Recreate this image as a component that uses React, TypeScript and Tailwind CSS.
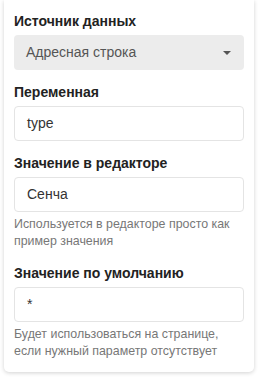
import React from "react";

function Label({ children }: { children: React.ReactNode }) {
  return <div className="text-[14px] leading-[18px] font-bold text-[#222] mb-[5px]">{children}</div>;
}

function Input({ value }: { value: string }) {
  return (
    <div className="h-[35px] rounded-[4px] border border-[#e4e4e4] bg-white flex items-center pl-[12px] text-[14px] text-[#333]">
      {value}
    </div>
  );
}

function Help({ children }: { children: React.ReactNode }) {
  return <div className="mt-[4px] text-[12.4px] leading-[17px] text-[#777]">{children}</div>;
}

export default function App() {
  return (
    <div className="w-[258px] h-[379px] bg-white" style={{ fontFamily: '"Liberation Sans", Arial, sans-serif' }}>
      <div className="ml-[4px] w-[250px] bg-white rounded-b-[5px] shadow-[0_1px_4px_rgba(0,0,0,0.18)] px-[10px] pt-[12px] pb-[12px] flex flex-col gap-[14px]">
        <div>
          <Label>Источник данных</Label>
          <div className="h-[35px] rounded-[4px] bg-[#ececec] flex items-center justify-between pl-[12px] pr-[13px] text-[14px] text-[#555]">
            <span>Адресная строка</span>
            <svg width="8" height="4" viewBox="0 0 8 4"><path d="M0 0H8L4 4Z" fill="#555" /></svg>
          </div>
        </div>
        <div className="-mt-[1px]">
          <Label>Переменная</Label>
          <Input value="type" />
        </div>
        <div className="-mt-[1px]">
          <Label>Значение в редакторе</Label>
          <Input value="Сенча" />
          <Help>Используется в редакторе просто как пример значения</Help>
        </div>
        <div>
          <Label>Значение по умолчанию</Label>
          <Input value="*" />
          <Help>Будет использоваться на странице, если нужный параметр отсутствует</Help>
        </div>
      </div>
    </div>
  );
}
